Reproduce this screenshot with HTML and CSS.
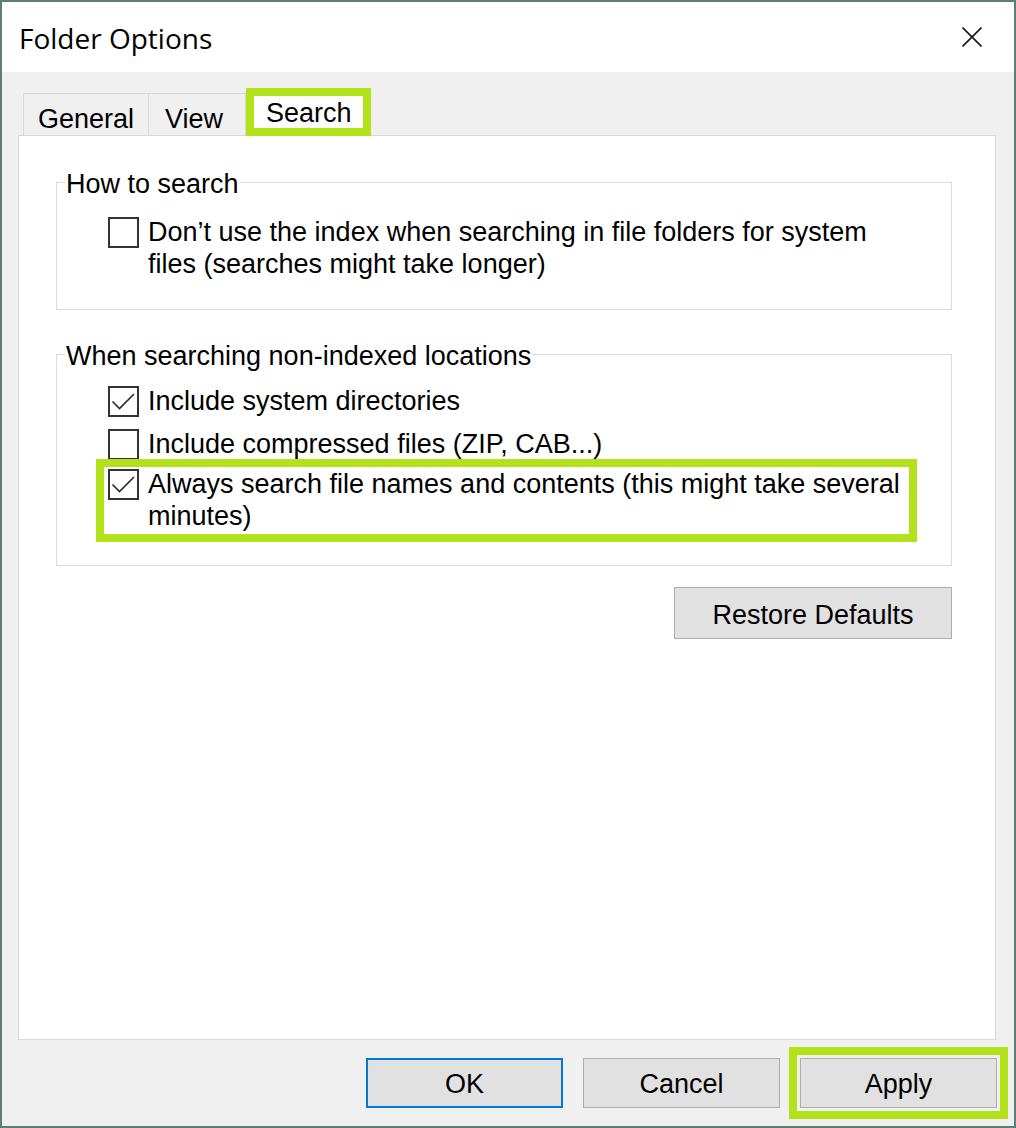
FILE: index.html
```html
<!DOCTYPE html>
<html lang="en">
<head>
<meta charset="utf-8">
<title>Folder Options</title>
<link rel="stylesheet" href="styles.css">
</head>
<body>
<div class="window">
  <header class="titlebar">
    <h1 class="title">Folder Options</h1>
    <button class="close" type="button" aria-label="Close">
      <svg width="20" height="20" viewBox="0 0 20 20"><path d="M0.5 0.5 L19.5 19.5 M19.5 0.5 L0.5 19.5" stroke="#1a1a1a" stroke-width="1.6" fill="none"/></svg>
    </button>
  </header>

  <div class="dialog">
    <div class="tabs">
      <div class="tab tab-general">General</div>
      <div class="tab tab-view">View</div>
      <div class="tab tab-active">Search</div>
    </div>

    <section class="panel">
      <fieldset class="group group-how">
        <legend>How to search</legend>
        <label class="option option-index">
          <span class="check"></span>
          <span class="option-text">Don’t use the index when searching in file folders for system files (searches might take longer)</span>
        </label>
      </fieldset>

      <fieldset class="group group-locations">
        <legend>When searching non-indexed locations</legend>
        <label class="option option-system">
          <span class="check is-checked">
            <svg width="27" height="27" viewBox="0 0 27 27"><polyline points="2.5,13.5 9.5,20.5 24,6" fill="none" stroke="#2a2a2a" stroke-width="1.6"/></svg>
          </span>
          <span class="option-text">Include system directories</span>
        </label>
        <label class="option option-compressed">
          <span class="check"></span>
          <span class="option-text">Include compressed files (ZIP, CAB...)</span>
        </label>
        <label class="option option-contents highlight">
          <span class="check is-checked">
            <svg width="27" height="27" viewBox="0 0 27 27"><polyline points="2.5,13.5 9.5,20.5 24,6" fill="none" stroke="#2a2a2a" stroke-width="1.6"/></svg>
          </span>
          <span class="option-text">Always search file names and contents (this might take several minutes)</span>
        </label>
      </fieldset>

      <div class="panel-actions">
        <button class="btn btn-restore" type="button">Restore Defaults</button>
      </div>
    </section>

    <footer class="footer">
      <button class="btn btn-default" type="button">OK</button>
      <button class="btn" type="button">Cancel</button>
      <button class="btn highlight-btn" type="button">Apply</button>
    </footer>
  </div>
</div>
</body>
</html>
```

FILE: styles.css
```css
* {
  box-sizing: border-box;
}

html,
body {
  margin: 0;
  padding: 0;
  background: #ffffff;
}

body {
  font-family: "Liberation Sans", Arial, sans-serif;
  font-size: 27px;
  color: #000000;
}

.window {
  width: 1016px;
  height: 1128px;
  border: 2px solid #5e7f78;
  background: #f0f0f0;
  display: flex;
  flex-direction: column;
}

/* title bar */
.titlebar {
  height: 70px;
  flex: none;
  background: #ffffff;
  display: flex;
  align-items: center;
  justify-content: space-between;
  padding: 0 32px 0 17px;
}

.title {
  margin: 0;
  font-family: "Open Sans", "Liberation Sans", sans-serif;
  font-weight: 400;
  font-size: 28px;
  line-height: 36px;
  padding-top: 1px;
  color: #000000;
}

.close {
  width: 20px;
  height: 20px;
  padding: 0;
  margin-top: -1px;
  border: 0;
  background: transparent;
  display: flex;
}

/* dialog body */
.dialog {
  flex: 1;
  display: flex;
  flex-direction: column;
  padding: 16px 18px 18px 16px;
}

.tabs {
  height: 47px;
  flex: none;
  display: flex;
  align-items: flex-end;
  padding-left: 5px;
  position: relative;
  z-index: 1;
}

.tab {
  height: 42px;
  line-height: 32px;
  padding-top: 9px;
  border-top: 1px solid #d9d9d9;
  border-right: 1px solid #d9d9d9;
  background: #f0f0f0;
  white-space: nowrap;
}

.tab-general {
  width: 126px;
  padding-left: 14px;
  border-left: 1px solid #d9d9d9;
}

.tab-view {
  width: 97px;
  padding-left: 16px;
}

.tab-active {
  width: 125px;
  height: 48px;
  margin-bottom: -1px;
  padding: 1px 0 0 12px;
  background: #ffffff;
  border: 8px solid #b3e21b;
  line-height: 32px;
}

.panel {
  flex: 1;
  background: #ffffff;
  border: 1px solid #d9d9d9;
  padding: 28px 43px 0 37px;
  display: flex;
  flex-direction: column;
}

/* group boxes */
.group {
  margin: 0;
  min-width: 0;
  border: 1px solid #dcdcdc;
  padding: 0;
}

.group legend {
  margin-left: 8px;
  padding: 4px 1px 0;
  line-height: 32px;
}

.group-how {
  padding-bottom: 29px;
}

.group-how .option {
  margin-top: 16px;
}

.group-locations {
  margin-top: 26px;
  padding-bottom: 31px;
}

.option {
  display: flex;
  align-items: flex-start;
  margin-left: 51px;
  line-height: 32px;
}

.option-text {
  padding-left: 9px;
}

.option-index .option-text {
  max-width: 780px;
}

.option-system {
  margin-top: 13px;
}

.option-compressed {
  margin-top: 11px;
}

.option-contents {
  margin-top: 7px;
}

.check {
  width: 31px;
  height: 31px;
  flex: none;
  margin-top: 1px;
  border: 2px solid #333333;
  background: #ffffff;
  display: flex;
}

/* annotation frame around a row */
.highlight {
  margin-left: 47px;
  width: 805px;
  padding: 1px 0 2px 4px;
  outline: 8px solid #b3e21b;
}

.highlight .option-text {
  flex: 1;
}

.panel-actions {
  display: flex;
  justify-content: flex-end;
  margin-top: 21px;
}

/* buttons */
.btn {
  font-family: "Liberation Sans", Arial, sans-serif;
  font-size: 27px;
  color: #000000;
  background: #e1e1e1;
  border: 1px solid #adadad;
  padding: 0;
  margin: 0;
  line-height: 32px;
}

.btn-restore {
  width: 278px;
  height: 52px;
  padding-top: 3px;
}

.footer {
  flex: none;
  display: flex;
  justify-content: flex-end;
  gap: 20px;
  margin-top: 18px;
  margin-right: -1px;
}

.footer .btn {
  width: 197px;
  height: 50px;
  padding-top: 1px;
}

.btn-default {
  border: 2px solid #0078d7;
}

.highlight-btn {
  outline: 8px solid #b3e21b;
  outline-offset: 3px;
}
```
